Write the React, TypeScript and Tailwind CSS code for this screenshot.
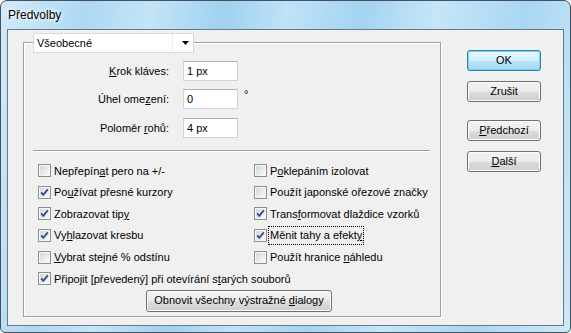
import React from "react";

function Check({ checked }: { checked: boolean }) {
  return (
    <svg width="13" height="13" viewBox="0 0 13 13" className="shrink-0">
      <defs>
        <linearGradient id="cbgrad" x1="0" y1="0" x2="1" y2="1">
          <stop offset="0" stopColor="#d6d6d6" />
          <stop offset="1" stopColor="#fafafa" />
        </linearGradient>
      </defs>
      <rect x="0.5" y="0.5" width="12" height="12" fill="#f6f6f6" stroke="#8e8f8f" />
      <rect x="2" y="2" width="9" height="9" fill="url(#cbgrad)" />
      {checked && (
        <path d="M3.2 6.4 L5.3 8.8 L9.8 3.4" fill="none" stroke="#2c4f9e" strokeWidth="1.9" />
      )}
    </svg>
  );
}

function Btn({ children, def, className = "" }: { children: React.ReactNode; def?: boolean; className?: string }) {
  return (
    <div
      className={
        "flex items-center justify-center rounded-[3px] border " +
        (def
          ? "border-[#3c7fb1] bg-[linear-gradient(#e8f6fd_0%,#d4eefc_50%,#bde4f9_51%,#a8d8f2_100%)] shadow-[inset_0_0_0_1px_#6fd0f8] "
          : "border-[#707070] bg-[linear-gradient(#f3f3f3_0%,#ebebeb_50%,#dddddd_51%,#cfcfcf_100%)] shadow-[inset_0_0_0_1px_#fcfcfc] ") +
        className
      }
    >
      {children}
    </div>
  );
}

function Row({ checked, children, focus }: { checked: boolean; children: React.ReactNode; focus?: boolean }) {
  return (
    <div className="h-[21.6px] flex items-center gap-[3px] whitespace-nowrap">
      <Check checked={checked} />
      <span className={focus ? "outline outline-1 outline-dotted outline-black px-[1px] -ml-[1px]" : ""}>{children}</span>
    </div>
  );
}

function Field({ label, value, mt, deg }: { label: React.ReactNode; value: string; mt: string; deg?: boolean }) {
  return (
    <div className={"flex items-center h-[20px] " + mt}>
      <div className="w-[145px] text-right whitespace-nowrap">{label}</div>
      <div className="ml-[14px] w-[55px] h-[20px] bg-white border border-[#d0d4d9] border-t-[#adb0b5] flex items-center pl-[3px]">
        {value}
      </div>
      {deg && <div className="ml-[6px] self-start -mt-[3px] text-[11px]">°</div>}
    </div>
  );
}

export default function App() {
  return (
    <div className="w-[571px] h-[333px] flex flex-col border border-[#44525e] rounded-t-[7px] rounded-b-[5px] bg-[linear-gradient(100deg,#d2eaf9_0%,#aed8f3_14%,#c4e4f8_24%,#9fd1f0_36%,#bfe2f7_46%,#a3d4f2_58%,#c6e5f8_70%,#a9d7f3_84%,#cde8f9_100%)] font-['Liberation_Sans',Arial,sans-serif] text-[11px] text-black overflow-hidden">
      <div className="h-[28px] flex items-center pl-[7px] text-[12px] [text-shadow:0_0_6px_#fff,0_0_4px_#fff]">
        Předvolby
      </div>
      <div className="mx-[6px] h-[297px] border border-[#6b7986] bg-[#f0f0f0] flex items-start pl-[15px] pt-[12px]">
        <div className="w-[418px] h-[275px] border border-[#a0a0a0] shadow-[1px_1px_0_#fff,inset_1px_1px_0_#fff] flex flex-col">
          <div className="ml-[9px] -mt-[10px] w-[161px] h-[20px] bg-white border border-[#d9d9d9] flex">
            <div className="w-[139px] pl-[3px] flex items-center border-r border-[#ececec]">Všeobecné</div>
            <div className="flex-1 flex items-center justify-end pr-[4px]">
              <svg width="7" height="4" viewBox="0 0 7 4">
                <path d="M0 0 H7 L3.5 4 Z" fill="#000" />
              </svg>
            </div>
          </div>
          <Field
            mt="mt-[8px]"
            label={
              <>
                <u>K</u>rok kláves:
              </>
            }
            value="1 px"
          />
          <Field
            mt="mt-[8px]"
            deg
            label={
              <>
                Úhel ome<u>z</u>ení:
              </>
            }
            value="0"
          />
          <Field
            mt="mt-[9px]"
            label={
              <>
                Poloměr <u>r</u>ohů:
              </>
            }
            value="4 px"
          />
          <div className="mt-[12px] ml-[9px] mr-[10px] h-[2px] border-t border-[#a0a0a0] border-b border-b-white" />
          <div className="mt-[8px] pl-[14px] grid grid-cols-[216px_1fr]">
            <Row checked={false}>
              Nepřepín<u>a</u>t pero na +/-
            </Row>
            <Row checked={false}>
              P<u>o</u>klepáním izolovat
            </Row>
            <Row checked>
              Po<u>u</u>žívat přesné kurzory
            </Row>
            <Row checked={false}>Použít japonské ořezové značky</Row>
            <Row checked>
              Zobrazovat tip<u>y</u>
            </Row>
            <Row checked>
              Trans<u>f</u>ormovat dlaždice vzorků
            </Row>
            <Row checked>
              Vy<u>h</u>lazovat kresbu
            </Row>
            <Row checked focus>
              Měnit tahy a efekt<u>y</u>
            </Row>
            <Row checked={false}>
              <u>V</u>ybrat stejné % odstínu
            </Row>
            <Row checked={false}>
              Použít hranice <u>n</u>áhledu
            </Row>
            <Row checked>
              Připojit [převedený] při otevírání s<u>t</u>arých souborů
            </Row>
            <div />
          </div>
          <Btn className="ml-[122px] w-[186px] h-[22px]">
            <span>
              Obnovit všechny výstražné <u>d</u>ialogy
            </span>
          </Btn>
        </div>
        <div className="ml-[26px] mt-[8px] flex flex-col w-[74px]">
          <Btn def className="h-[21px]">
            OK
          </Btn>
          <Btn className="h-[21px] mt-[10px]">Zrušit</Btn>
          <Btn className="h-[21px] mt-[18px]">
            <span>
              <u>P</u>ředchozí
            </span>
          </Btn>
          <Btn className="h-[21px] mt-[10px]">
            <span>
              <u>D</u>alší
            </span>
          </Btn>
        </div>
      </div>
    </div>
  );
}
